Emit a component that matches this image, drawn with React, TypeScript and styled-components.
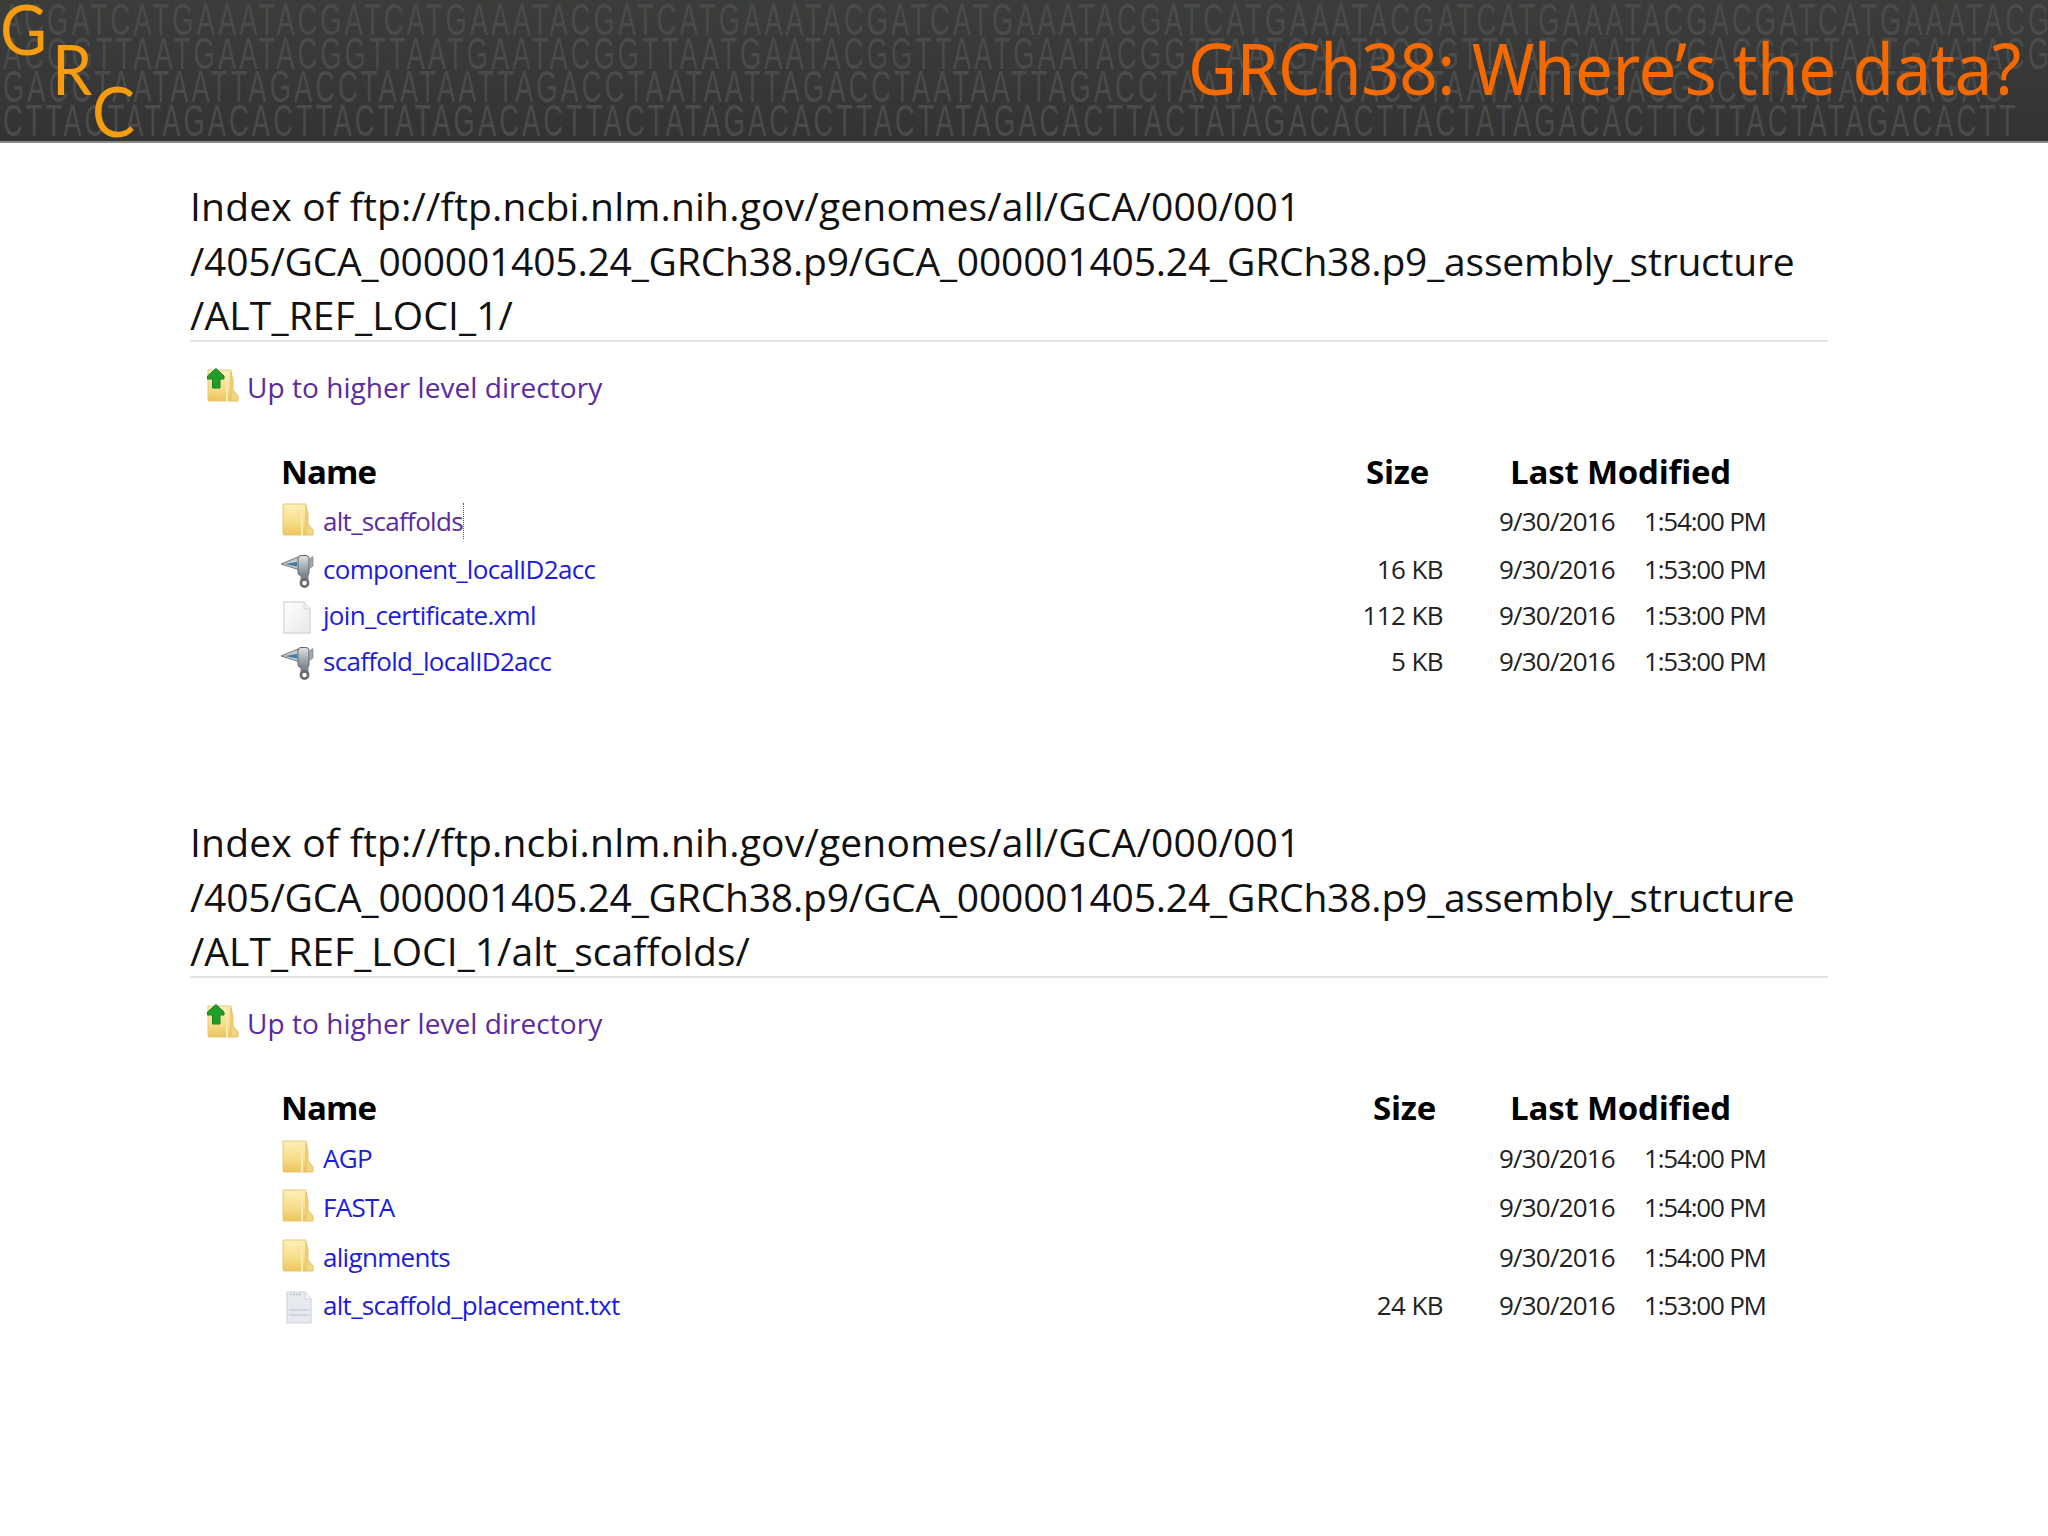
import React from "react";
import styled, { createGlobalStyle } from "styled-components";

const GlobalStyle = createGlobalStyle`
    html, body {
        margin: 0;
        padding: 0;
        background: #fff;
    }
    body {
        font-family: "Open Sans", "Noto Sans", sans-serif;
    }
`;

const Page = styled.div`
    width: 2048px;
    height: 1536px;
    overflow: hidden;
    background: #fff;
`;

const Banner = styled.header`
    position: relative;
    height: 141px;
    overflow: hidden;
    background: linear-gradient(#3b3d3b, #333333);
    border-bottom: 2px solid #8a8a8a;
    display: flex;
    justify-content: flex-end;
    align-items: center;
`;

const DnaRows = styled.div`
    position: absolute;
    top: 3px;
    left: 3px;
    display: flex;
    flex-direction: column;
    transform: scaleX(0.62);
    transform-origin: left top;
`;

const DnaRow = styled.div`
    height: 33.5px;
    line-height: 33.5px;
    font-family: "Liberation Sans", sans-serif;
    font-size: 44px;
    letter-spacing: 5px;
    white-space: pre;
    color: #4a4b4a;
`;

const LogoLetter = styled.span<{ $x: number; $y: number }>`
    position: absolute;
    left: ${(p) => p.$x}px;
    top: ${(p) => p.$y}px;
    font-family: "Lato", sans-serif;
    font-weight: 400;
    font-size: 70px;
    line-height: 70px;
    color: #f59c0f;
    transform: scaleX(0.92);
    transform-origin: left top;
`;

const SlideTitle = styled.h1`
    position: relative;
    margin: 0 27px 7px 0;
    font-family: "Noto Sans", sans-serif;
    font-weight: 400;
    font-size: 72px;
    letter-spacing: -0.6px;
    color: #f56a00;
    transform: scaleX(0.937);
    transform-origin: right center;
`;

const Listing = styled.section<{ $top: number }>`
    margin: ${(p) => p.$top}px 0 0 190px;
    width: 1638px;
`;

const IndexTitle = styled.h2`
    margin: 0;
    height: 161px;
    font-size: 39px;
    line-height: 54.5px;
    font-weight: 400;
    color: #111;
    border-bottom: 2px solid #e4e4e4;
`;

const TitleLine = styled.div<{ $spacing: number }>`
    letter-spacing: ${(p) => p.$spacing}px;
    white-space: nowrap;
`;

const UpRow = styled.div`
    display: flex;
    align-items: center;
    gap: 8px;
    height: 40px;
    margin: 25px 0 0 16px;
`;

const FileLink = styled.a<{ $visited?: boolean; $focused?: boolean }>`
    color: ${(p) => (p.$visited ? "#5a2ba0" : "#1c1cdc")};
    text-decoration: none;
    ${(p) => p.$focused && "border-right: 1px dotted #555;"}
`;

const UpLink = styled(FileLink)`
    font-size: 28px;
    letter-spacing: 0.05px;
`;

const FileTable = styled.div`
    margin: 39px 0 0 91px;
    display: flex;
    flex-direction: column;
`;

const Row = styled.div<{ $height: number }>`
    display: grid;
    grid-template-columns: 1062px 100px 56px 145px 1fr;
    align-items: center;
    height: ${(p) => p.$height}px;
    font-size: 26px;
    color: #222;
`;

const HeaderRow = styled(Row)`
    font-size: 33px;
    font-weight: 700;
    color: #000;
`;

const NameHead = styled.div`
    grid-column: 1;
    letter-spacing: -0.9px;
`;

const SizeHead = styled.div<{ $inset: number }>`
    grid-column: 2;
    justify-self: end;
    margin-right: ${(p) => p.$inset}px;
    letter-spacing: -0.2px;
`;

const DateHead = styled.div`
    grid-column: 4 / 6;
    margin-left: 11px;
    white-space: nowrap;
    letter-spacing: -0.2px;
`;

const NameCell = styled.div`
    grid-column: 1;
    display: flex;
    align-items: center;
    gap: 9px;
    letter-spacing: -0.7px;
`;

const IconBox = styled.span<{ $shift: number }>`
    width: 33px;
    height: 34px;
    flex: none;
    display: block;
    transform: translateY(${(p) => p.$shift}px);
`;

const SizeCell = styled.div`
    grid-column: 2;
    justify-self: end;
    white-space: nowrap;
    letter-spacing: -0.6px;
`;

const DateCell = styled.div`
    grid-column: 4;
    white-space: nowrap;
    letter-spacing: -0.8px;
`;

const TimeCell = styled.div`
    grid-column: 5;
    white-space: nowrap;
    letter-spacing: -1.2px;
`;

const GradientDefs = () => (
    <svg width="0" height="0" style={{ position: "absolute" }} aria-hidden="true">
        <defs>
            <linearGradient id="folderFill" x1="0" y1="0" x2="0" y2="1">
                <stop offset="0" stopColor="#fdf0b8" />
                <stop offset="0.6" stopColor="#f6dc88" />
                <stop offset="1" stopColor="#ecc45c" />
            </linearGradient>
            <linearGradient id="pageFill" x1="0" y1="0" x2="1" y2="1">
                <stop offset="0" stopColor="#ffffff" />
                <stop offset="1" stopColor="#e8e8ec" />
            </linearGradient>
            <linearGradient id="metalFill" x1="0" y1="0" x2="0" y2="1">
                <stop offset="0" stopColor="#dfe3e6" />
                <stop offset="1" stopColor="#7d8389" />
            </linearGradient>
        </defs>
    </svg>
);

const FolderShape = () => (
    <>
        <path d="M2 2 H25 V33 H3 Q2 33 2 32 Z" fill="url(#folderFill)" stroke="#e6c873" strokeWidth="1" />
        <path d="M25 4 L27 12 V22 L32 28 V33 H25 Z" fill="#f3d67f" stroke="#e6c06a" strokeWidth="1" />
        <path d="M21 3 V33" stroke="#f9e9ac" strokeWidth="2" />
    </>
);

const FolderIcon = () => (
    <IconBox $shift={-2}>
        <svg width="33" height="34" viewBox="0 0 33 34">
            <FolderShape />
        </svg>
    </IconBox>
);

const UpFolderIcon = () => (
    <IconBox $shift={-2}>
        <svg width="33" height="34" viewBox="0 0 33 34">
            <FolderShape />
            <path d="M10 0.5 L18 8 V11 H14 V20 H6.5 V11 H1.5 V8 Z" fill="#1f9e2c" stroke="#14801f" strokeWidth="1" />
        </svg>
    </IconBox>
);

const InstallerIcon = () => (
    <IconBox $shift={2}>
        <svg width="33" height="34" viewBox="0 0 33 34">
            <path d="M0 10 L17 3 L19 16 Z" fill="#c3c8cd" stroke="#777d83" strokeWidth="1" />
            <path d="M4 10 L16 8 V12.5 Z" fill="#3f7ea2" />
            <rect x="17" y="1.5" width="11" height="20" rx="3" fill="url(#metalFill)" stroke="#62686e" />
            <path d="M28 5 L32 2.5 V12 L28 15 Z" fill="#a0a6ab" stroke="#777d83" strokeWidth="0.6" />
            <rect x="19.5" y="20" width="8" height="7" fill="#7f858b" />
            <circle cx="23.5" cy="29" r="3.6" fill="none" stroke="#666c72" strokeWidth="2.6" />
        </svg>
    </IconBox>
);

const PageIcon = () => (
    <IconBox $shift={2}>
        <svg width="33" height="34" viewBox="0 0 33 34">
            <path d="M3 2 H23 L29 9 V33 H3 Z" fill="url(#pageFill)" stroke="#d9d9dd" strokeWidth="1.4" />
            <path d="M23 2 V9 H29" fill="#eeeef1" stroke="#d5d5da" />
        </svg>
    </IconBox>
);

const TextFileIcon = () => (
    <IconBox $shift={2}>
        <svg width="33" height="34" viewBox="0 0 33 34">
            <path d="M6 2 H24 L30 9 V33 H6 Z" fill="#e6eaee" stroke="#cfd4da" strokeWidth="1.2" />
            <path d="M24 2 V9 H30" fill="#f5f6f8" stroke="#cfd4da" />
            <path d="M9 4.5 H20" stroke="#b9c0c8" strokeWidth="1.6" strokeDasharray="2 1" />
            <path d="M8 20 H28 M8 25 H28" stroke="#c8ced5" strokeWidth="1.6" />
        </svg>
    </IconBox>
);

const iconFor = {
    folder: <FolderIcon />,
    installer: <InstallerIcon />,
    page: <PageIcon />,
    text: <TextFileIcon />,
};

interface IEntry {
    icon: keyof typeof iconFor;
    name: string;
    size?: string;
    time: string;
    height: number;
    visited?: boolean;
    focused?: boolean;
}

const first: IEntry[] = [
    { icon: "folder", name: "alt_scaffolds", time: "1:54:00 PM", height: 48, visited: true, focused: true },
    { icon: "installer", name: "component_localID2acc", size: "16 KB", time: "1:53:00 PM", height: 47 },
    { icon: "page", name: "join_certificate.xml", size: "112 KB", time: "1:53:00 PM", height: 46 },
    { icon: "installer", name: "scaffold_localID2acc", size: "5 KB", time: "1:53:00 PM", height: 46 },
];

const second: IEntry[] = [
    { icon: "folder", name: "AGP", time: "1:54:00 PM", height: 49 },
    { icon: "folder", name: "FASTA", time: "1:54:00 PM", height: 50 },
    { icon: "folder", name: "alignments", time: "1:54:00 PM", height: 49 },
    { icon: "text", name: "alt_scaffold_placement.txt", size: "24 KB", time: "1:53:00 PM", height: 48 },
];

const BASE = "/405/GCA_000001405.24_GRCh38.p9/GCA_000001405.24_GRCh38.p9_assembly_structure";

function DirectoryListing(props: {
    top: number;
    path: string;
    pathSpacing: number;
    sizeInset: number;
    entries: IEntry[];
}) {
    const { top, path, pathSpacing, sizeInset, entries } = props;
    return (
        <Listing $top={top}>
            <IndexTitle>
                <TitleLine $spacing={0.2}>Index of ftp://ftp.ncbi.nlm.nih.gov/genomes/all/GCA/000/001</TitleLine>
                <TitleLine $spacing={-0.19}>{BASE}</TitleLine>
                <TitleLine $spacing={pathSpacing}>{path}</TitleLine>
            </IndexTitle>
            <UpRow>
                <UpFolderIcon />
                <UpLink $visited href="#up">
                    Up to higher level directory
                </UpLink>
            </UpRow>
            <FileTable>
                <HeaderRow $height={51}>
                    <NameHead>Name</NameHead>
                    <SizeHead $inset={sizeInset}>Size</SizeHead>
                    <DateHead>Last Modified</DateHead>
                </HeaderRow>
                {entries.map((entry) => (
                    <Row key={entry.name} $height={entry.height}>
                        <NameCell>
                            {iconFor[entry.icon]}
                            <FileLink href="#file" $visited={entry.visited} $focused={entry.focused}>
                                {entry.name}
                            </FileLink>
                        </NameCell>
                        <SizeCell>{entry.size}</SizeCell>
                        <DateCell>9/30/2016</DateCell>
                        <TimeCell>{entry.time}</TimeCell>
                    </Row>
                ))}
            </FileTable>
        </Listing>
    );
}

const dnaUnits = ["ACGATCATGAAAT", "ACGGTTAATGAAT", "GACCTAATAATTA", "CTTACTATAGACA"];

export default function App() {
    return (
        <Page>
            <GlobalStyle />
            <GradientDefs />
            <Banner>
                <DnaRows aria-hidden="true">
                    {dnaUnits.map((unit) => (
                        <DnaRow key={unit}>{unit.repeat(6) + unit.slice(0, 3) + unit + unit.slice(0, 3)}</DnaRow>
                    ))}
                </DnaRows>
                <LogoLetter $x={0} $y={-7}>G</LogoLetter>
                <LogoLetter $x={52} $y={33}>R</LogoLetter>
                <LogoLetter $x={92} $y={75}>C</LogoLetter>
                <SlideTitle>GRCh38: Where’s the data?</SlideTitle>
            </Banner>
            <DirectoryListing top={36} path="/ALT_REF_LOCI_1/" pathSpacing={0.15} sizeInset={14} entries={first} />
            <DirectoryListing
                top={131}
                path="/ALT_REF_LOCI_1/alt_scaffolds/"
                pathSpacing={0.05}
                sizeInset={7}
                entries={second}
            />
        </Page>
    );
}
